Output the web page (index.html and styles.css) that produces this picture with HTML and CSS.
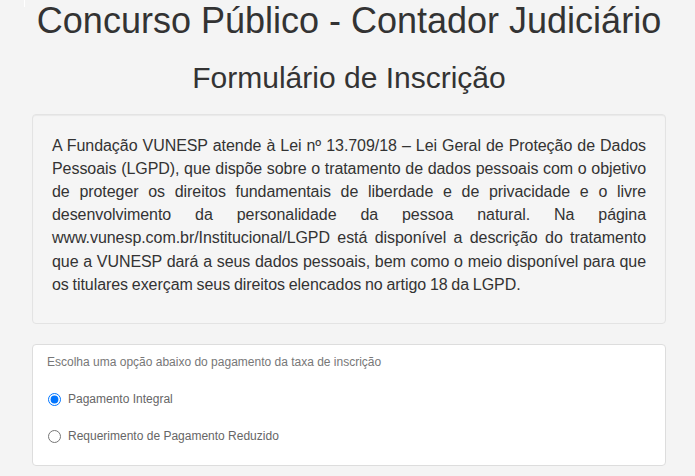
FILE: index.html
```html
<!DOCTYPE html>
<html lang="pt-BR">
<head>
<meta charset="utf-8">
<title>Formulário de Inscrição</title>
<link rel="stylesheet" href="styles.css">
</head>
<body>
<span class="caret-mark"></span>
<div class="container">
  <h1 class="title">Concurso Público - Contador Judiciário</h1>
  <h2 class="subtitle">Formulário de Inscrição</h2>
  <div class="well">
    <p>A Fundação VUNESP atende à Lei nº 13.709/18 – Lei Geral de Proteção de Dados Pessoais (LGPD), que dispõe sobre o tratamento de dados pessoais com o objetivo de proteger os direitos fundamentais de liberdade e de privacidade e o livre desenvolvimento da personalidade da pessoa natural. Na página www.vunesp.com.br/Institucional/LGPD está disponível a descrição do tratamento que a VUNESP dará a seus dados pessoais, bem como o meio disponível para que os titulares exerçam seus direitos elencados no artigo 18 da LGPD.</p>
  </div>
  <div class="panel">
    <div class="panel-label">Escolha uma opção abaixo do pagamento da taxa de inscrição</div>
    <label class="option"><input type="radio" name="pag" checked><span>Pagamento Integral</span></label>
    <label class="option"><input type="radio" name="pag"><span>Requerimento de Pagamento Reduzido</span></label>
  </div>
</div>
</body>
</html>
```
FILE: styles.css
```css
html, body {
  margin: 0;
  padding: 0;
}
body {
  background: #f4f4f4;
  font-family: "Liberation Sans", Arial, sans-serif;
  color: #333;
  font-size: 14px;
  line-height: 1.428571;
  position: relative;
}
.caret-mark {
  position: absolute;
  left: 24px;
  top: 0;
  width: 1px;
  height: 7px;
  background: #fff;
}
.container {
  padding: 0 29px 0 32px;
}
.title {
  margin: 1px 0 0;
  font-size: 36px;
  font-weight: 400;
  line-height: 1.1;
  text-align: center;
}
.subtitle {
  margin: 20px 0 0;
  font-size: 30px;
  font-weight: 400;
  line-height: 1.1;
  text-align: center;
}
.well {
  margin-top: 20px;
  background: #f5f5f5;
  border: 1px solid #e3e3e3;
  border-radius: 4px;
  box-shadow: inset 0 1px 1px rgba(0,0,0,.05);
  padding: 19px 19px 17px 19px;
}
.well p {
  margin: 0 0 10px;
  font-size: 16px;
  line-height: 1.45;
  text-align: justify;
  letter-spacing: -0.06px;
  word-spacing: -0.6px;
}
.panel {
  margin-top: 20px;
  background: #fff;
  border: 1px solid #ddd;
  border-radius: 4px;
  padding: 9px 14px 19px;
  display: flex;
  flex-direction: column;
}
.panel-label {
  font-size: 12px;
  color: #777;
  line-height: 17px;
  margin-bottom: 20px;
}
.option {
  display: flex;
  align-items: center;
  font-size: 12px;
  color: #666;
  height: 18px;
  margin-bottom: 19px;
}
.option:last-child {
  margin-bottom: 0;
}
.option input {
  margin: 0 7px 0 1px;
  width: 13px;
  height: 13px;
}
```
